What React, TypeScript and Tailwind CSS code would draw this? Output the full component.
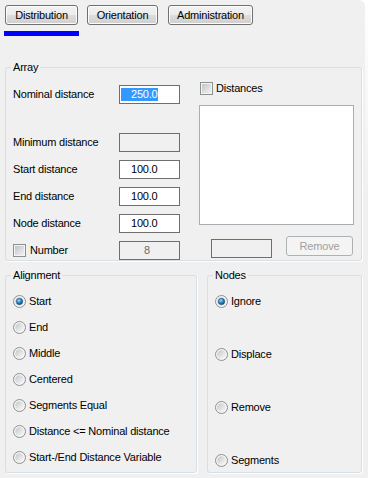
import React, { useId } from "react";

const btn =
  "h-[20px] rounded-[3px] border border-[#707070] bg-[linear-gradient(to_bottom,#f2f2f2_0%,#ebebeb_50%,#dddddd_50%,#cfcfcf_100%)] shadow-[inset_0_0_0_1px_#fcfcfc] flex items-center justify-center";

function Radio({ checked }: { checked?: boolean }) {
  const id = useId();
  return (
    <svg width="13" height="13" viewBox="0 0 13 13" className="shrink-0">
      <defs>
        <linearGradient id={id + "r"} x1="0" y1="0" x2="1" y2="1">
          <stop offset="0" stopColor="#c4c6c9" />
          <stop offset="1" stopColor="#fbfbfb" />
        </linearGradient>
        <radialGradient id={id + "d"} cx="0.4" cy="0.35" r="0.7">
          <stop offset="0" stopColor="#a6dcf7" />
          <stop offset="0.5" stopColor="#2a86c6" />
          <stop offset="1" stopColor="#0b3f74" />
        </radialGradient>
      </defs>
      <circle cx="6.5" cy="6.5" r="6" fill="#f4f4f4" stroke="#8e8f8f" />
      <circle cx="6.5" cy="6.5" r="4.3" fill={`url(#${id}r)`} />
      {checked && <circle cx="6.5" cy="6.5" r="3.2" fill={`url(#${id}d)`} stroke="#1d4f7c" strokeWidth="0.5" />}
    </svg>
  );
}

function Check() {
  const id = useId();
  return (
    <svg width="13" height="13" viewBox="0 0 13 13" className="shrink-0">
      <defs>
        <linearGradient id={id} x1="0" y1="0" x2="1" y2="1">
          <stop offset="0" stopColor="#c0c4c9" />
          <stop offset="1" stopColor="#f2f2f2" />
        </linearGradient>
      </defs>
      <rect x="0.5" y="0.5" width="12" height="12" fill="#f4f4f4" stroke="#8e8f8f" />
      <rect x="2" y="2" width="9" height="9" fill={`url(#${id})`} />
    </svg>
  );
}

function Field({ label, value, disabled }: { label: string; value?: string; disabled?: boolean }) {
  return (
    <div className="flex items-center h-[19px]">
      <span className="w-[106px]">{label}</span>
      <div
        className={`w-[61px] h-[19px] border border-[#6e6e6e] flex items-center pl-[11px] ${
          disabled ? "bg-[#f0f0f0]" : "bg-white"
        }`}
      >
        {value}
      </div>
    </div>
  );
}

export default function App() {
  const align = [
    "Start",
    "End",
    "Middle",
    "Centered",
    "Segments Equal",
    "Distance <= Nominal distance",
    "Start-/End Distance Variable",
  ];
  const nodes = ["Ignore", "Displace", "Remove", "Segments"];

  return (
    <div className="w-[368px] h-[478px] overflow-hidden flex bg-white font-['Liberation_Sans',Arial,sans-serif] text-[11px] leading-[13px] tracking-[-0.2px] text-black">
      <div className="w-[365px] h-full bg-[#f0f0f0] rounded-tr-[6px] pt-[5px] pl-[5px]">
        {/* Tabs */}
        <div className="flex">
          <div className={`${btn} w-[73px]`}>Distribution</div>
          <div className={`${btn} w-[71px] ml-[9px]`}>Orientation</div>
          <div className={`${btn} w-[85px] ml-[10px]`}>Administration</div>
        </div>
        <div className="mt-[6px] ml-[-1px] w-[75px] h-[5px] bg-[#0000ff]" />

        {/* Array */}
        <fieldset className="mt-[25px] w-[357px] h-[200px] border border-[#d5dfe5] rounded-[3px] shadow-[1px_1px_0_#ffffff] p-0 m-0">
          <legend className="ml-[5px] px-[2px]">Array</legend>
          <div className="flex pl-[7px]">
            <div className="w-[167px]">
              <div className="mt-[11px] flex items-center h-[19px]">
                <span className="w-[106px]">Nominal distance</span>
                <div className="w-[61px] h-[19px] border border-[#6e6e6e] bg-white flex items-center pl-px">
                  <span className="bg-[#3399ff] text-white pl-[10px]">250.0</span>
                </div>
              </div>
              <div className="mt-[29px]">
                <Field label="Minimum distance" disabled />
              </div>
              <div className="mt-[8px]">
                <Field label="Start distance" value="100.0" />
              </div>
              <div className="mt-[8px]">
                <Field label="End distance" value="100.0" />
              </div>
              <div className="mt-[8px]">
                <Field label="Node distance" value="100.0" />
              </div>
              <div className="mt-[8px] flex items-center h-[19px]">
                <div className="w-[106px] flex items-center gap-[4px]">
                  <Check />
                  <span>Number</span>
                </div>
                <div className="w-[61px] h-[19px] border border-[#6e6e6e] bg-[#f0f0f0] flex items-center pl-[24px] text-[#6d6d6d]">
                  8
                </div>
              </div>
            </div>
            <div className="ml-[19px]">
              <div className="mt-[8px] pl-px flex items-center gap-[3px] h-[13px]">
                <Check />
                <span>Distances</span>
              </div>
              <div className="mt-[10px] w-[155px] h-[120px] bg-white border border-[#abadb3]" />
              <div className="mt-[11px] flex items-start">
                <div className="ml-[12px] mt-[3px] w-[61px] h-[19px] border border-[#6e6e6e] bg-[#f0f0f0]" />
                <div className="ml-[14px] w-[67px] h-[20px] rounded-[3px] border border-[#adb2b5] bg-[#f4f4f4] text-[#a0a0a0] flex items-center justify-center">
                  Remove
                </div>
              </div>
            </div>
          </div>
        </fieldset>

        {/* Alignment / Nodes */}
        <div className="flex mt-[8px]">
          <fieldset className="w-[192px] h-[204px] border border-[#d5dfe5] rounded-[3px] shadow-[1px_1px_0_#ffffff] p-0 m-0">
            <legend className="ml-[5px] px-[2px]">Alignment</legend>
            <div className="pl-[7px]">
              {align.map((a, i) => (
                <div key={a} className="mt-[13px] h-[13px] flex items-center gap-[3px]">
                  <Radio checked={i === 0} />
                  <span>{a}</span>
                </div>
              ))}
            </div>
          </fieldset>
          <fieldset className="ml-[10px] w-[155px] h-[204px] border border-[#d5dfe5] rounded-[3px] shadow-[1px_1px_0_#ffffff] p-0 m-0">
            <legend className="ml-[5px] px-[2px]">Nodes</legend>
            <div className="pl-[7px]">
              {nodes.map((n, i) => (
                <div
                  key={n}
                  className={`${i === 0 ? "mt-[13px]" : "mt-[40px]"} h-[13px] flex items-center gap-[3px]`}
                >
                  <Radio checked={i === 0} />
                  <span>{n}</span>
                </div>
              ))}
            </div>
          </fieldset>
        </div>
      </div>
      <div className="flex-1 h-full bg-[linear-gradient(to_bottom,#ffffff,#f0f0f0_40%)]" />
    </div>
  );
}
